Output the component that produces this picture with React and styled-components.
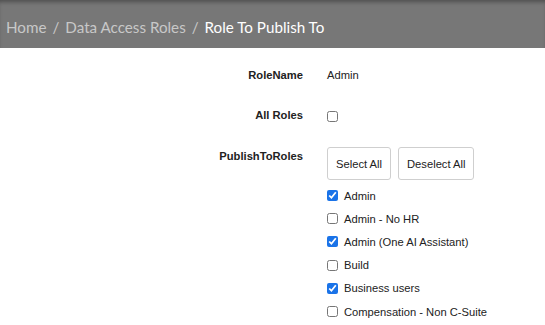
import React, { useState } from 'react';
import styled, { createGlobalStyle } from 'styled-components';

const GlobalStyle = createGlobalStyle`
  body {
    margin: 0;
    background: #ffffff;
    font-family: "Liberation Sans", Arial, sans-serif;
    color: #222;
  }
`;

const Header = styled.div`
  height: 48px;
  box-sizing: border-box;
  background: #777777;
  box-shadow: inset 0 4px 4px -2px rgba(0, 0, 0, 0.35);
  display: flex;
  align-items: center;
  padding: 5px 6px 0;
  font-family: "Lato", "Open Sans", sans-serif;
  font-size: 15.2px;
`;

const Crumb = styled.span`
  color: ${props => (props.current ? '#ffffff' : '#c8c8c8')};
`;

const Sep = styled.span`
  color: #c8c8c8;
  margin: 0 6px;
`;

const Form = styled.div`
  display: grid;
  grid-template-columns: 303px 1fr;
  column-gap: 24px;
  padding-top: 19px;
  font-size: 11.2px;
`;

const Label = styled.div`
  text-align: right;
  font-weight: bold;
  color: #222;
  height: ${props => props.h}px;
  line-height: 14px;
  padding-top: ${props => props.pt || 0}px;
`;

const Value = styled.div`
  height: ${props => props.h}px;
  line-height: 14px;
  padding-top: ${props => props.pt || 0}px;
`;

const Box = styled.input`
  margin: 0;
  width: 11px;
  height: 11px;
  accent-color: #1a73e8;
  vertical-align: middle;
`;

const Buttons = styled.div`
  display: flex;
  gap: 7px;
  margin-top: -2px;
`;

const Button = styled.button`
  font-family: "Liberation Sans", Arial, sans-serif;
  font-size: 11.2px;
  color: #222;
  background: #ffffff;
  border: 1px solid #cfcfcf;
  border-radius: 3px;
  height: 33px;
  padding: 0 8px;
`;

const List = styled.div`
  display: flex;
  flex-direction: column;
  margin-top: 4px;
`;

const Item = styled.label`
  display: flex;
  align-items: center;
  gap: 6px;
  height: 23.2px;
  color: #222;
`;

const roles = [
  { name: 'Admin', on: true },
  { name: 'Admin - No HR', on: false },
  { name: 'Admin (One AI Assistant)', on: true },
  { name: 'Build', on: false },
  { name: 'Business users', on: true },
  { name: 'Compensation - Non C-Suite', on: false },
];

function App() {
  const [checked, setChecked] = useState(roles.map(r => r.on));
  const [allRoles, setAllRoles] = useState(false);

  const toggle = i => setChecked(c => c.map((v, j) => (j === i ? !v : v)));

  return (
    <>
      <GlobalStyle />
      <Header>
        <Crumb>Home</Crumb>
        <Sep>/</Sep>
        <Crumb>Data Access Roles</Crumb>
        <Sep>/</Sep>
        <Crumb current>Role To Publish To</Crumb>
      </Header>
      <Form>
        <Label h={40} pt={1}>RoleName</Label>
        <Value h={40} pt={1}>Admin</Value>

        <Label h={41} pt={0}>All Roles</Label>
        <Value h={41} pt={0}>
          <Box type="checkbox" checked={allRoles} onChange={() => setAllRoles(!allRoles)} />
        </Value>

        <Label pt={0}>PublishToRoles</Label>
        <Value>
          <Buttons>
            <Button onClick={() => setChecked(roles.map(() => true))}>Select All</Button>
            <Button onClick={() => setChecked(roles.map(() => false))}>Deselect All</Button>
          </Buttons>
          <List>
            {roles.map((r, i) => (
              <Item key={r.name}>
                <Box type="checkbox" checked={checked[i]} onChange={() => toggle(i)} />
                {r.name}
              </Item>
            ))}
          </List>
        </Value>
      </Form>
    </>
  );
}

export default App;
